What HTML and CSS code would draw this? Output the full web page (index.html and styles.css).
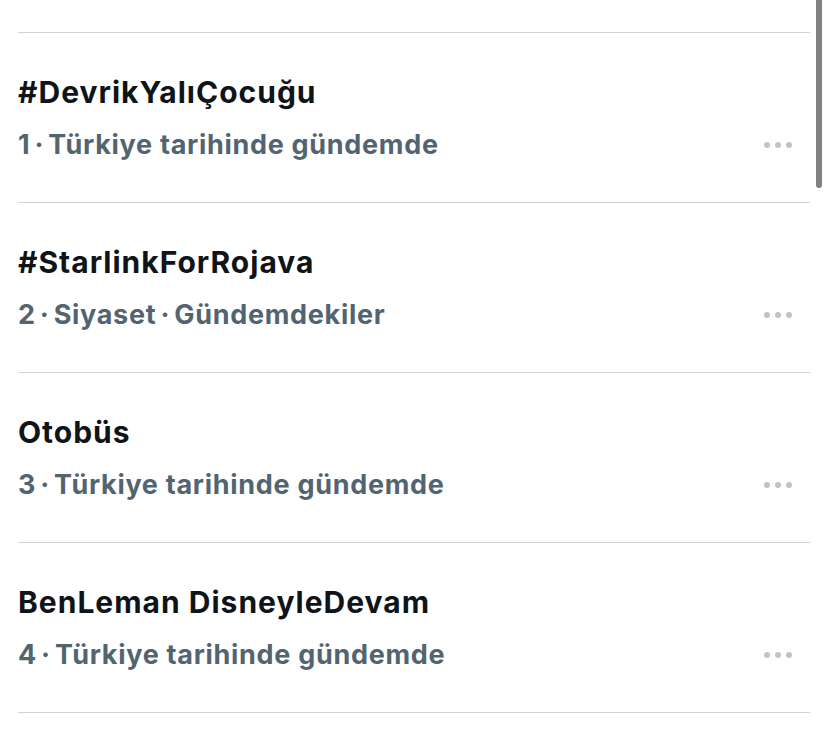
FILE: index.html
```html
<!DOCTYPE html>
<html lang="tr">
<head>
<meta charset="utf-8">
<link rel="stylesheet" href="styles.css">
</head>
<body>
<div class="page">
  <div class="list">
    <div class="top-spacer"></div>
    <div class="trend">
      <div class="title">#DevrikYalıÇocuğu</div>
      <div class="meta-row">
        <div class="meta">1<span class="sep"> · </span>Türkiye tarihinde gündemde</div>
        <div class="more"><span></span><span></span><span></span></div>
      </div>
    </div>
    <div class="trend">
      <div class="title">#StarlinkForRojava</div>
      <div class="meta-row">
        <div class="meta">2<span class="sep"> · </span>Siyaset<span class="sep"> · </span>Gündemdekiler</div>
        <div class="more"><span></span><span></span><span></span></div>
      </div>
    </div>
    <div class="trend">
      <div class="title">Otobüs</div>
      <div class="meta-row">
        <div class="meta">3<span class="sep"> · </span>Türkiye tarihinde gündemde</div>
        <div class="more"><span></span><span></span><span></span></div>
      </div>
    </div>
    <div class="trend">
      <div class="title">BenLeman DisneyleDevam</div>
      <div class="meta-row">
        <div class="meta">4<span class="sep"> · </span>Türkiye tarihinde gündemde</div>
        <div class="more"><span></span><span></span><span></span></div>
      </div>
    </div>
  </div>
  <div class="scrollbar"></div>
</div>
</body>
</html>
```

FILE: styles.css
```css
html, body {
  margin: 0;
  padding: 0;
  background: #ffffff;
}
body {
  font-family: "Inter", "Noto Sans", sans-serif;
  width: 827px;
  height: 732px;
  overflow: hidden;
}
.page {
  position: relative;
  height: 732px;
}
.list {
  padding: 0 17px 0 18px;
}
.top-spacer {
  height: 32px;
  border-bottom: 1px solid #cfd3d6;
}
.trend {
  box-sizing: border-box;
  height: 170px;
  padding-top: 41px;
  border-bottom: 1px solid #cfd3d6;
  display: flex;
  flex-direction: column;
}
.title {
  font-size: 30px;
  font-weight: 700;
  color: #0f1419;
  line-height: 36px;
  letter-spacing: 1px;
}
.meta-row {
  margin-top: 19px;
  display: flex;
  align-items: center;
  justify-content: space-between;
}
.meta {
  font-size: 27px;
  font-weight: 700;
  color: #536471;
  line-height: 32px;
  letter-spacing: 0.7px;
}
.sep {
  word-spacing: -3px;
}
.more {
  display: flex;
  gap: 5px;
  margin-right: 18px;
}
.more span {
  width: 6px;
  height: 6px;
  border-radius: 50%;
  background: #bcc5cc;
}
.scrollbar {
  position: absolute;
  right: 5px;
  top: 0;
  width: 6px;
  height: 188px;
  background: #808080;
  border-radius: 0 0 3px 3px;
}
```
